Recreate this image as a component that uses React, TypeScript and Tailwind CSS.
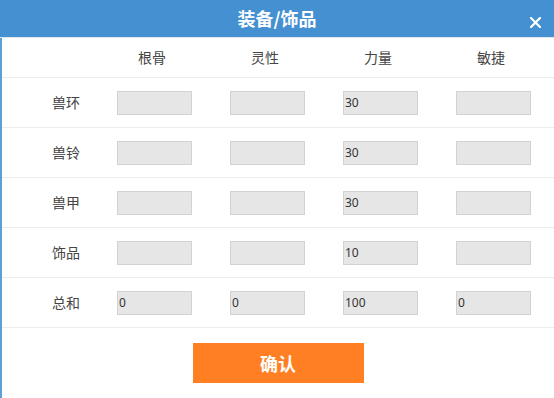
const cjk = { fontFamily: '"Noto Sans CJK SC", "Noto Sans", sans-serif' };

const columns = ['根骨', '灵性', '力量', '敏捷'];

const rows: { label: string; values: string[] }[] = [
  { label: '兽环', values: ['', '', '30', ''] },
  { label: '兽铃', values: ['', '', '30', ''] },
  { label: '兽甲', values: ['', '', '30', ''] },
  { label: '饰品', values: ['', '', '10', ''] },
  { label: '总和', values: ['0', '0', '100', '0'] },
];

function StatBox({ value }: { value: string }) {
  return (
    <div
      className="flex h-[24px] w-[75px] items-center border border-[#d2d2d2] bg-[#e6e6e6] px-[1px] text-[12px] leading-none text-[#333]"
      style={{ fontFamily: '"Noto Sans", sans-serif' }}
    >
      {value}
    </div>
  );
}

export default function App() {
  return (
    <div className="h-[398px] w-[554px] overflow-hidden bg-white" style={cjk}>
      <div className="relative flex h-[38px] items-center justify-center border-b border-[#dfe8f1] bg-[#4590d0]">
        <span className="text-[18px] font-bold text-white">装备/饰品</span>
        <button className="absolute left-[530px] top-[17px]">
          <svg width="11" height="11" viewBox="0 0 11 11">
            <path d="M1 1L10 10M10 1L1 10" stroke="white" strokeWidth="2.2" strokeLinecap="square" />
          </svg>
        </button>
      </div>

      <div className="border-l-2 border-[#5a9fd8]">
        <div className="flex h-[40px] items-center border-b border-[#ececec] pl-[115px] text-[14px] text-[#444]">
          {columns.map((c) => (
            <div key={c} className="w-[113px] shrink-0 pr-[43px] text-center">
              {c}
            </div>
          ))}
        </div>

        {rows.map((row) => (
          <div key={row.label} className="flex h-[50px] items-center border-b border-[#ececec]">
            <div className="w-[115px] shrink-0 pl-[50px] text-[14px] text-[#444]">{row.label}</div>
            {row.values.map((v, i) => (
              <div key={i} className="w-[113px] shrink-0">
                <StatBox value={v} />
              </div>
            ))}
          </div>
        ))}

        <div className="flex h-[71px] justify-center pt-[15px]">
          <button className="h-[40px] w-[171px] bg-[#ff7f22] text-[18px] font-bold text-white">确认</button>
        </div>
      </div>
    </div>
  );
}
